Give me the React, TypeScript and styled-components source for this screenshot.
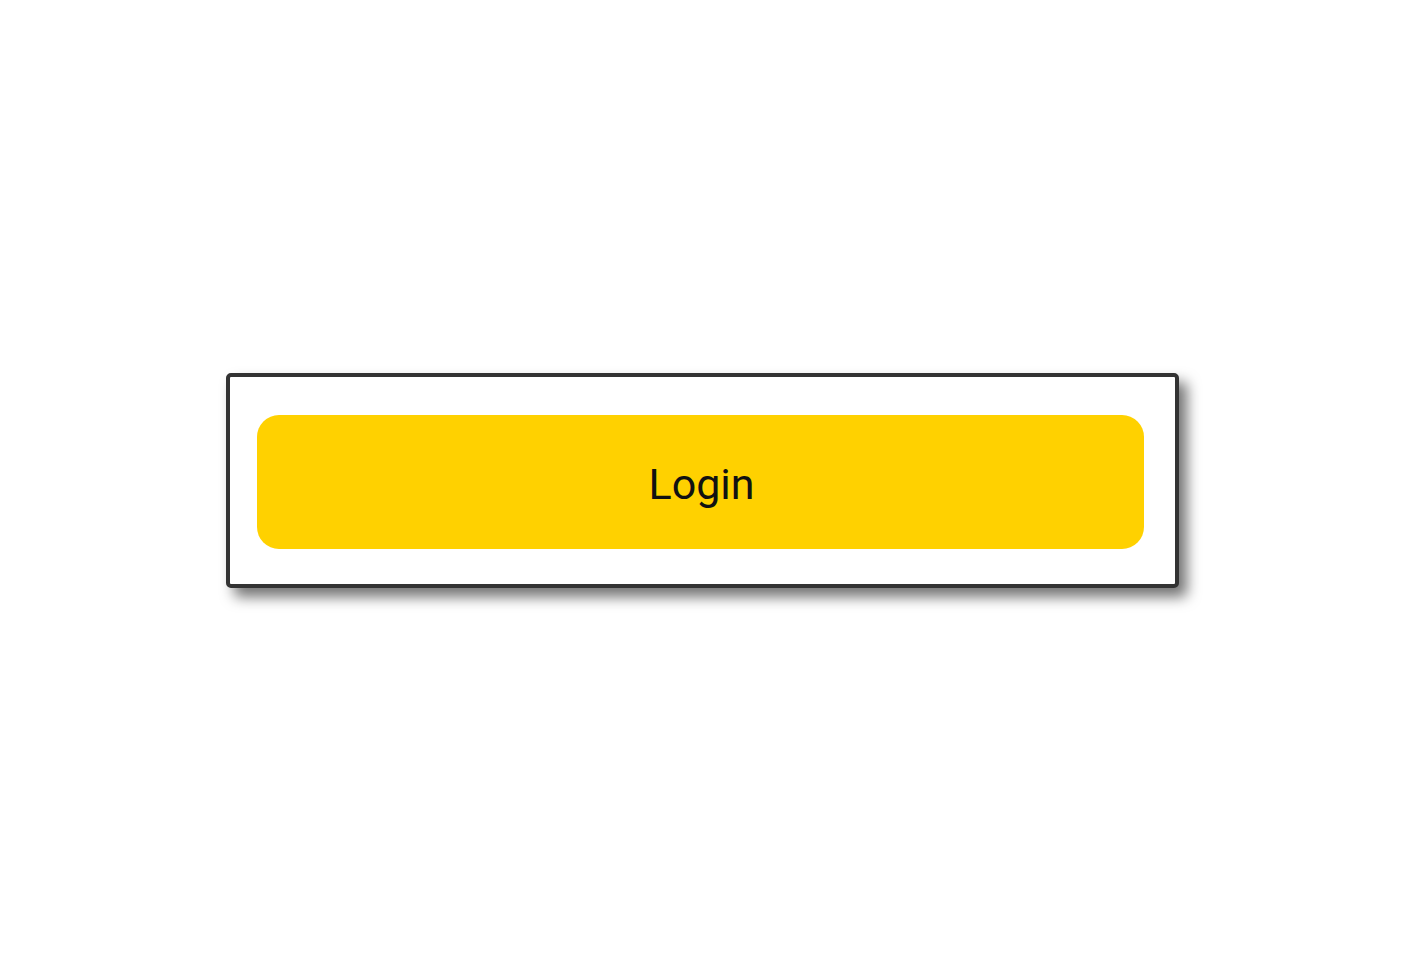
import styled, { createGlobalStyle } from 'styled-components';

const GlobalStyle = createGlobalStyle`
  html, body, #root {
    margin: 0;
    height: 100%;
  }
  body {
    background: #ffffff;
    font-family: Roboto, "Liberation Sans", Arial, sans-serif;
  }
`;

// Full-viewport stage that centres the login card.
const Stage = styled.main`
  display: flex;
  align-items: center;
  justify-content: center;
  height: 100%;
`;

const Card = styled.div`
  box-sizing: border-box;
  width: 953px;
  height: 215px;
  padding: 38px 31px 35px 27px;
  border: 4px solid #333333;
  border-radius: 5px;
  background: #ffffff;
  box-shadow: 8px 9px 14px rgba(0, 0, 0, 0.55);
  display: flex;
`;

// Label sits a touch below centre, as in the original.
const LoginButton = styled.button`
  flex: 1;
  padding: 4px 0 0 3px;
  border: none;
  border-radius: 22px;
  background: #ffd100;
  color: #111111;
  font: 400 43px/1 Roboto, "Liberation Sans", Arial, sans-serif;
  cursor: pointer;
`;

export default function App() {
  return (
    <>
      <GlobalStyle />
      <Stage>
        <Card>
          <LoginButton type="button">Login</LoginButton>
        </Card>
      </Stage>
    </>
  );
}
